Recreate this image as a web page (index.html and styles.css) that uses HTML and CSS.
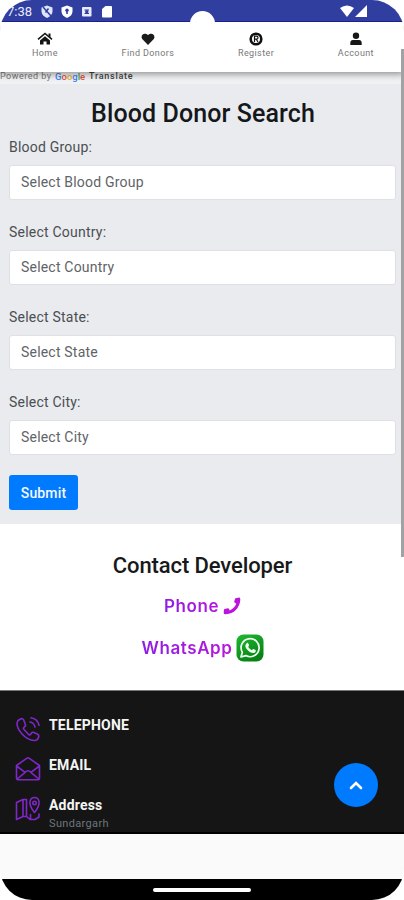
FILE: index.html
```html
<!DOCTYPE html>
<html lang="en">
<head>
<meta charset="utf-8">
<title>Blood Donor Search</title>
<link rel="stylesheet" href="styles.css">
</head>
<body>
<div class="phone">
  <header class="status">
    <span class="clock">7:38</span>
    <svg class="status-icons" width="74" height="14" viewBox="0 0 74 14">
      <path d="M6 .5l5.500 2v4c0 3-2.500 5.200-5.500 6.500-3-1.300-5.500-3.500-5.500-6.500v-4z" fill="#dfe4ff"/>
      <path d="M2 2l8 9M4.500 7.500l3-4" stroke="#303f9f" stroke-width="1.500"/>
      <path d="M26 .5l5.500 2v4c0 3-2.300 5.200-5.500 6.500-3.200-1.300-5.500-3.500-5.500-6.500v-4z" fill="#fff"/>
      <circle cx="26" cy="5.300" r="1.700" fill="#303f9f"/><path d="M25.200 6h1.600v3h-1.600z" fill="#303f9f"/>
      <rect x="41" y="2" width="9.500" height="9.500" rx="1" fill="#e8ebff"/>
      <path d="M43.500 5h4.500M43.500 8.500h4.500" stroke="#303f9f" stroke-width="1"/><circle cx="45.800" cy="6.700" r="1.700" fill="#303f9f"/>
      <path d="M64.500 1H70q1 0 1 1v9.500q0 1-1 1h-8q-1 0-1-1V4z" fill="#fff"/>
    </svg>
    <svg class="signal" width="28" height="13" viewBox="0 0 28 13">
      <path d="M0 3Q7-2 14 3L7 12z" fill="#fff"/><path d="M27 0v12H15z" fill="#fff"/>
    </svg>
    <span class="camera"></span>
  </header>
  <nav class="tabs">
    <a class="tab home">
      <svg width="16" height="13" viewBox="0 0 16 13"><path d="M1 6.800L8 1l7 5.800" fill="none" stroke="#151515" stroke-width="1.600"/><path d="M11.500 1h2v4l-2-1.500zM8 3.700l5 4.200V12H9.500V9h-3v3H3V7.900z" fill="#151515"/></svg>
      <span>Home</span></a>
    <a class="tab find">
      <svg width="14" height="13" viewBox="0 0 14 13"><path d="M7 12.500L1.200 6.500C-1 3 3-1 7 2.500 11-1 15 3 12.800 6.500z" fill="#1b1b1b"/></svg>
      <span>Find Donors</span></a>
    <a class="tab register">
      <svg width="14" height="14" viewBox="0 0 14 14"><circle cx="7" cy="7" r="5.300" fill="#fff" stroke="#111" stroke-width="2.600"/><path d="M5.500 10V4.200h2q1.500 0 1.500 1.500T7.500 7.200h-2M7.300 7.200L9 10" fill="none" stroke="#111" stroke-width="1.200"/></svg>
      <span>Register</span></a>
    <a class="tab account">
      <svg width="12" height="14" viewBox="0 0 12 14"><circle cx="6" cy="3.700" r="3.200" fill="#171717"/><path d="M.3 13v-2Q.3 8 3 8h6q2.700 0 2.700 3v2z" fill="#171717"/></svg>
      <span>Account</span></a>
  </nav>
  <main class="search">
    <div class="translate"><span class="powered">Powered by</span><span class="google"><i class="b">G</i><i class="r">o</i><i class="y">o</i><i class="b">g</i><i class="g">l</i><i class="r">e</i></span><b>Translate</b></div>
    <h1>Blood Donor Search</h1>
    <form>
      <label><span>Blood Group:</span><span class="field">Select Blood Group</span></label>
      <label><span>Select Country:</span><span class="field">Select Country</span></label>
      <label><span>Select State:</span><span class="field">Select State</span></label>
      <label><span>Select City:</span><span class="field">Select City</span></label>
      <button type="button">Submit</button>
    </form>
  </main>
  <section class="developer">
    <h2>Contact Developer</h2>
    <a class="contact"><span class="phone-word">Phone</span>
      <svg width="18" height="18" viewBox="0 0 18 18"><path d="M12.300 1.200L16.500.5Q17.500 1 17.300 3C16.500 11 11 16.800 3 17.300q-2 .2-2.300-1L.9 12.800q.1-.6.800-.8l3.200-.8q.7-.1 1 .5l.9 1.800C9.500 12.300 12 9.800 13.300 6.800l-1.700-1.200q-.5-.4-.4-1z" fill="#bd14dc"/></svg></a>
    <a class="contact whatsapp"><span class="wa-word">WhatsApp</span>
      <svg width="28" height="28" viewBox="0 0 28 28"><defs><linearGradient id="wa" x1="0" y1="0" x2=".5" y2="1"><stop stop-color="#20b832"/><stop offset="1" stop-color="#088316"/></linearGradient></defs><rect x=".5" y=".5" width="27" height="27" rx="7" fill="url(#wa)"/><path d="M5 23l1.300-4.800a9 9 0 1 1 3.500 3.400z" fill="none" stroke="#effff0" stroke-width="1.700" stroke-linejoin="round"/><path d="M10.700 9.200c.7-.7 1.400-.3 1.600.3l.7 1.600c.2.500-.1.900-.8 1.700 1 1.800 2 2.700 3.700 3.400.8-.9 1.200-1.500 1.700-1.200l1.900.9c.5.300.4 1.800-.5 2.500-1.700 1.300-4.500.3-6.700-1.700-2.500-2.300-4.200-5.300-1.600-7.500z" fill="#effff0"/></svg></a>
  </section>
  <footer class="info">
    <div class="item">
      <svg width="26" height="26" viewBox="0 0 26 26" class="line"><path d="M5.500 3L3 4.500C-1 12 11 25 20 24.500q3-.5 3.800-4 .2-1.500-1.200-2.200l-3.600-1.800q-1.500-.7-2.500.5l-1 1.500q-1 .7-2-.2L9 13.500q-1-1-.1-2L10 10.300q.8-.8.400-1.800L8.700 4Q7.800 1.800 5.500 3zM15 6q4 .5 5 5M16 1.800q6.500 1 8 7.500"/></svg>
      <div><h3>TELEPHONE</h3></div></div>
    <div class="item">
      <svg width="26" height="26" viewBox="0 0 26 26" class="line"><path d="M1.500 9.500L12 2.200q1-.7 2 0l10.500 7.300v12.300q0 2-2 2h-19q-2 0-2-2zM1.500 10l8.700 6.300q2.800-3 5.600 0L24.500 10M2.200 23l8-6.700M23.800 23l-8-6.700"/></svg>
      <div><h3>EMAIL</h3></div></div>
    <div class="item">
      <svg width="26" height="26" viewBox="0 0 26 26" class="line"><path d="M1.500 6.500L8 3.500V20.500L1.500 23.500zM8 3.500h3.500v17H8M11.500 20.500L15 23.500h5l4-2.500v-3M15.500 18.500v5M19.500 16.500C12 7.500 15 1.500 19.500 1.500S27 7.500 19.500 16.500z"/><circle cx="19.500" cy="7" r="1.700"/></svg>
      <div><h3>Address</h3><p>Sundargarh</p></div></div>
    <span class="to-top"><svg width="14" height="10" viewBox="0 0 14 10"><path d="M2 8l5-5 5 5" fill="none" stroke="#fff" stroke-width="2.600" stroke-linecap="round"/></svg></span>
  </footer>
  <div class="blank"></div>
  <div class="gesture"><span></span></div>
  <span class="scrollbar"></span>
</div>
</body>
</html>
```
FILE: styles.css
```css
* { box-sizing: border-box; }
body { margin: 0; background: #fff; font-family: Roboto, sans-serif; }
.phone { position: relative; width: 404px; height: 900px; border-radius: 32px; overflow: hidden; background: #fff; display: flex; flex-direction: column; }
h1, h2, h3, p { margin: 0; }
svg { display: block; flex: none; }
.status { position: relative; z-index: 3; height: 22px; flex: none; background: #303f9f; border-bottom: 1px solid #1a1f91; display: flex; align-items: flex-start; padding-top: 4px; }
.clock { width: 41px; padding-left: 7px; font-size: 13px; line-height: 16px; color: #e8ebff; }
.status-icons { margin-top: 1px; }
.signal { margin: 1px 36px 0 auto; }
.camera { position: absolute; left: 190px; top: 11px; width: 25px; height: 25px; border-radius: 50%; background: #fff; }
.tabs { position: relative; z-index: 2; height: 50px; flex: none; background: #fff; box-shadow: 0 2px 7px rgba(0,0,0,.42); display: flex; justify-content: space-between; padding: 10px 30px 0 32px; }
.tab { display: flex; flex-direction: column; align-items: center; font-size: 9px; line-height: 12px; color: #777; white-space: nowrap; }
.tab svg { height: 14px; margin-bottom: 1px; }
.tab span { letter-spacing: .4px; }
.search { height: 452px; flex: none; background: #e9ebee; padding: 0 9px; }
.translate { display: flex; height: 12px; margin: 0 -9px; align-items: flex-start; font-size: 9px; line-height: 9px; color: #777; white-space: nowrap; background: #f1f2f3; }
.powered { width: 55px; letter-spacing: .5px; }
.google { width: 34px; font-weight: 500; font-size: 9.500px; }
.google i { font-style: normal; }
.b { color: #4285f4; } .r { color: #e65348; } .y { color: #e9b72c; } .g { color: #45a65a; }
.translate b { font-weight: 500; color: #444; letter-spacing: .75px; }
h1 { font-size: 25px; line-height: 30px; margin-top: 15px; padding-left: 2px; font-weight: 500; text-align: center; color: #15171a; letter-spacing: .1px; }
form { display: flex; flex-direction: column; align-items: flex-start; padding-top: 6px; }
label { display: block; width: 387px; height: 85px; font-size: 14px; color: #4b4e52; letter-spacing: .22px; }
label > span:first-child { display: block; height: 30px; line-height: 24px; }
label > .field { display: flex; align-items: center; width: 387px; height: 35px; padding: 0 0 2px 11px; background: #fff; border: 1px solid #dde0e4; border-radius: 3px; color: #606468; letter-spacing: .2px; }
button { width: 69px; height: 35px; border: 0; border-radius: 3px; background: #007bff; color: #f4f8ff; font: 500 14px Roboto, sans-serif; letter-spacing: .15px; padding: 0; }
.developer { height: 166px; flex: none; background: #fff; display: flex; flex-direction: column; align-items: center; padding: 28px 0 0 1px; }
h2 { font-size: 22px; line-height: 28px; font-weight: 500; color: #18191b; letter-spacing: -.1px; }
.contact { display: flex; align-items: center; gap: 4px; margin-top: 13px; height: 26px; font-family: Inter, sans-serif; font-size: 17px; font-weight: 600; letter-spacing: .6px; }
.contact span { background: linear-gradient(90deg, #8f1ce5, #b718dd); background-clip: text; color: transparent; }
.whatsapp { margin-top: 15px; height: 28px; gap: 3px; }
.info { position: relative; height: 144px; flex: none; background: #151515; border-top: 1px solid #777; border-bottom: 2px solid #000; padding: 25px 0 0 15px; display: flex; flex-direction: column; }
.item { display: flex; gap: 8px; height: 40px; flex: none; }
.line { fill: none; stroke: #8126c9; stroke-width: 1.6; stroke-linejoin: round; stroke-linecap: round; }
h3 { font-size: 14px; line-height: 18px; font-weight: 700; color: #f5f5f5; letter-spacing: .2px; }
.info p { font-size: 11px; line-height: 16px; margin-top: 2px; color: #6c757d; letter-spacing: .35px; }
.to-top { position: absolute; left: 334px; top: 72px; width: 44px; height: 44px; border-radius: 50%; background: #007bff; display: flex; align-items: center; justify-content: center; }
.blank { height: 45px; flex: none; background: #fafafa; }
.gesture { height: 21px; flex: none; background: #000; display: flex; justify-content: center; padding-top: 9px; }
.gesture span { width: 98px; height: 4px; border-radius: 2px; background: #fff; }
.scrollbar { position: absolute; z-index: 4; left: 401px; top: 49px; width: 3px; height: 508px; background: #a0a2a4; }
```
